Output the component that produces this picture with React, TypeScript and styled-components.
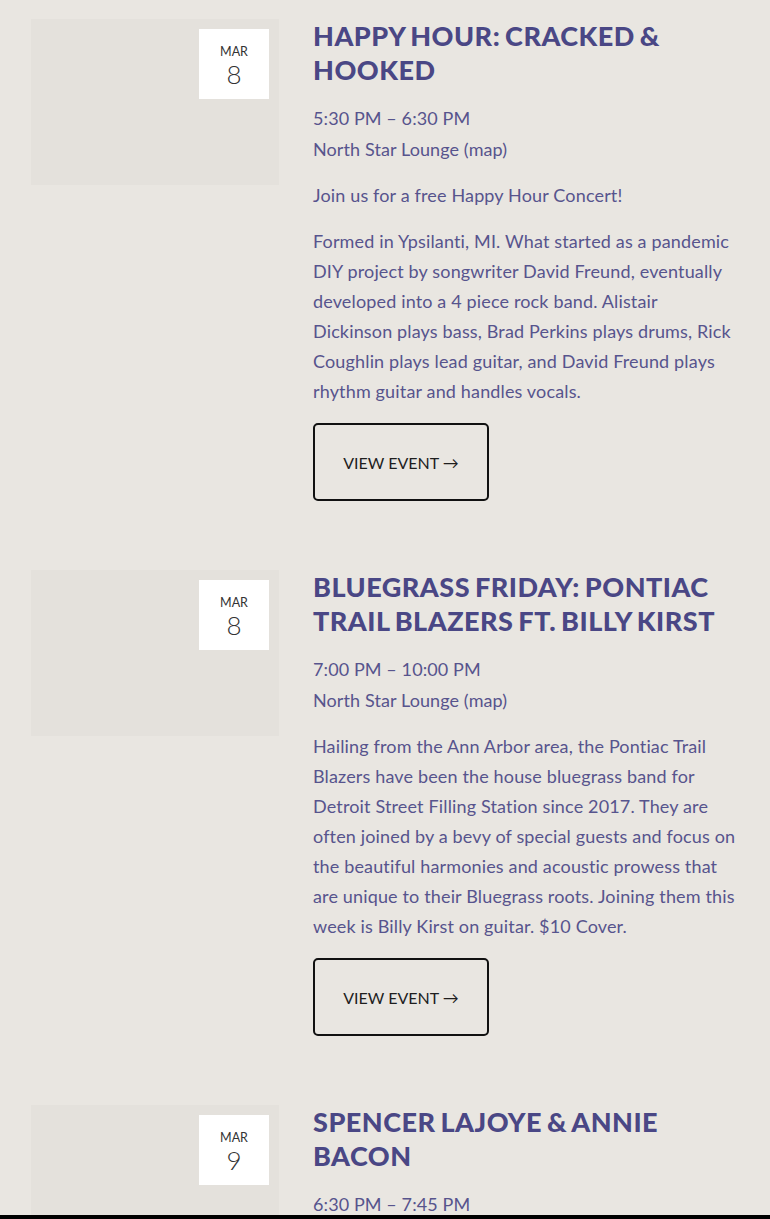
import React from "react";
import styled, { createGlobalStyle } from "styled-components";

const Global = createGlobalStyle`
  html, body { margin: 0; padding: 0; background: #e9e6e1; overflow: hidden; height: 1219px; }
  * { box-sizing: border-box; }
`;

const Page = styled.main`
  display: flex;
  flex-direction: column;
  gap: 69px;
  padding: 19px 30px 0 31px;
  font-family: "Lato", "Liberation Sans", sans-serif;
`;

const Event = styled.article`
  display: grid;
  grid-template-columns: 248px 1fr;
  column-gap: 34px;
  align-items: start;
`;

const Thumb = styled.div`
  position: relative;
  height: 166px;
  background: #e4e1dc;
`;

const DateBadge = styled.div`
  position: absolute;
  top: 10px;
  right: 10px;
  width: 70px;
  height: 70px;
  padding-top: 3px;
  background: #ffffff;
  display: flex;
  flex-direction: column;
  align-items: center;
  justify-content: center;
  color: #333;
`;

const Month = styled.span`
  font-size: 12.5px;
  line-height: 16px;
  text-transform: uppercase;
`;

const Day = styled.span`
  font-size: 26px;
  line-height: 28px;
  font-weight: 300;
`;

const Body = styled.div`
  display: flex;
  flex-direction: column;
  color: #57548d;
`;

const Title = styled.h2`
  margin: 0 0 16px;
  font-family: "Lato", sans-serif;
  font-weight: 900;
  font-size: 27px;
  line-height: 34px;
  text-transform: uppercase;
  color: #4a4785;
  letter-spacing: 0.5px;
  word-spacing: -2px;
`;

const Meta = styled.div`
  font-size: 18px;
  line-height: 30.5px;
  letter-spacing: 0.1px;
`;

const Para = styled.p`
  margin: 16px 0 0;
  font-size: 18px;
  line-height: 30px;
  letter-spacing: 0.15px;
`;

const Button = styled.a`
  margin-top: 17px;
  align-self: flex-start;
  width: 176px;
  height: 78px;
  display: flex;
  align-items: center;
  justify-content: center;
  border: 2px solid #111;
  border-radius: 5px;
  font-size: 16px;
  color: #1e1e1e;
  text-decoration: none;
  text-transform: uppercase;
`;

const BottomBar = styled.div`
  position: fixed;
  left: 0;
  right: 0;
  bottom: 0;
  height: 4px;
  background: #000;
`;

type Ev = { month: string; day: string; title: string; time: string; place: string; paras: string[] };

const events: Ev[] = [
  {
    month: "Mar",
    day: "8",
    title: "Happy Hour: Cracked & Hooked",
    time: "5:30 PM – 6:30 PM",
    place: "North Star Lounge (map)",
    paras: [
      "Join us for a free Happy Hour Concert!",
      "Formed in Ypsilanti, MI. What started as a pandemic DIY project by songwriter David Freund, eventually developed into a 4 piece rock band. Alistair Dickinson plays bass, Brad Perkins plays drums, Rick Coughlin plays lead guitar, and David Freund plays rhythm guitar and handles vocals.",
    ],
  },
  {
    month: "Mar",
    day: "8",
    title: "Bluegrass Friday: Pontiac Trail Blazers ft. Billy Kirst",
    time: "7:00 PM – 10:00 PM",
    place: "North Star Lounge (map)",
    paras: [
      "Hailing from the Ann Arbor area, the Pontiac Trail Blazers have been the house bluegrass band for Detroit Street Filling Station since 2017. They are often joined by a bevy of special guests and focus on the beautiful harmonies and acoustic prowess that are unique to their Bluegrass roots. Joining them this week is Billy Kirst on guitar. $10 Cover.",
    ],
  },
  {
    month: "Mar",
    day: "9",
    title: "Spencer LaJoye & Annie Bacon",
    time: "6:30 PM – 7:45 PM",
    place: "North Star Lounge (map)",
    paras: ["An evening of songs."],
  },
];

export default function App() {
  return (
    <>
      <Global />
      <Page>
        {events.map((e, i) => (
          <Event key={i}>
            <Thumb>
              <DateBadge>
                <Month>{e.month}</Month>
                <Day>{e.day}</Day>
              </DateBadge>
            </Thumb>
            <Body>
              <Title>{e.title}</Title>
              <Meta>{e.time}</Meta>
              <Meta>{e.place}</Meta>
              {e.paras.map((p, j) => (
                <Para key={j}>{p}</Para>
              ))}
              <Button href="#">View Event →</Button>
            </Body>
          </Event>
        ))}
      </Page>
      <BottomBar />
    </>
  );
}
